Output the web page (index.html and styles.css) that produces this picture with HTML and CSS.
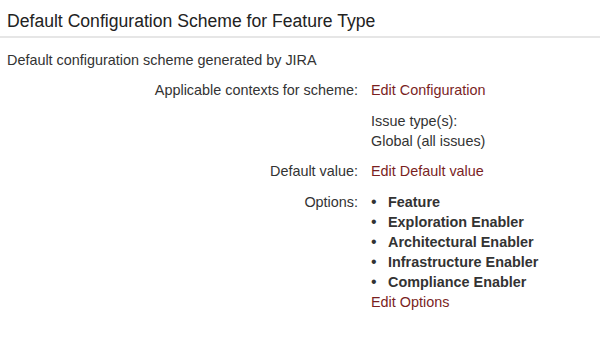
FILE: index.html
```html
<!DOCTYPE html>
<html>
  <head>
    <link rel="stylesheet" href="styles.css">
  </head>
  <body>
    <h2 class="title">Default Configuration Scheme for Feature Type</h2>
    <p class="desc">Default configuration scheme generated by JIRA</p>
    <div class="details">
      <div class="label">Applicable contexts for scheme:</div>
      <div class="value">
        <a href="#">Edit Configuration</a>
        <div class="contexts">
          Issue type(s):<br />
          Global (all issues)
        </div>
      </div>

      <div class="label">Default value:</div>
      <div class="value"><a href="#">Edit Default value</a></div>

      <div class="label last">Options:</div>
      <div class="value last">
        <ul class="options">
          <li><span class="dot">&bull;</span>Feature</li>
          <li><span class="dot">&bull;</span>Exploration Enabler</li>
          <li><span class="dot">&bull;</span>Architectural Enabler</li>
          <li><span class="dot">&bull;</span>Infrastructure Enabler</li>
          <li><span class="dot">&bull;</span>Compliance Enabler</li>
        </ul>
        <a href="#">Edit Options</a>
      </div>
    </div>
  </body>
</html>
```

FILE: styles.css
```css
body {
  margin: 0;
  font-family: "Liberation Sans", Arial, sans-serif;
  font-size: 14.4px;
  line-height: 20px;
  color: #333;
  background: #fff;
}

.title {
  margin: 0;
  padding: 10px 7px 4px;
  font-size: 17.6px;
  line-height: 22px;
  font-weight: normal;
  color: #222;
  border-bottom: 2px solid #e6e6e6;
}

.desc {
  margin: 12px 7px 0;
}

.details {
  display: grid;
  grid-template-columns: 358px 1fr;
  column-gap: 13px;
  row-gap: 10px;
  margin-top: 10px;
}

.label {
  text-align: right;
}

.last {
  margin-top: 1px;
}

a {
  color: #7a1f1f;
  text-decoration: none;
}

.contexts {
  margin-top: 11px;
}

.options {
  list-style: none;
  margin: 0;
  padding: 0;
  font-weight: bold;
}

.options li {
  display: flex;
}

.dot {
  width: 17px;
  flex-shrink: 0;
  font-size: 16px;
  font-weight: normal;
}
```
